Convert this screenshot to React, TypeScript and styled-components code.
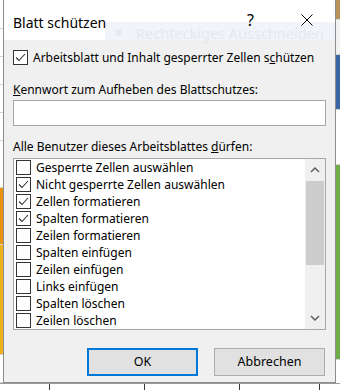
import React from 'react'
import styled, { createGlobalStyle } from 'styled-components'

const GlobalStyle = createGlobalStyle`
  html, body {
    margin: 0;
    padding: 0;
    background: #ffffff;
  }
  body {
    font-family: "Noto Sans", "Open Sans", sans-serif;
    font-size: 12px;
    line-height: 16px;
    color: #000;
  }
`

const Screen = styled.div`
  width: 340px;
  height: 390px;
  display: grid;
  grid-template-columns: 3px 333px 4px;
  grid-template-rows: 383px 7px;
  overflow: hidden;
`

const SideStrip = styled.div`
  display: flex;
  flex-direction: column;
  background: #ffffff;
`

const Band = styled.div<{ $h: number; $c: string }>`
  height: ${(p) => p.$h}px;
  flex: none;
  background: ${(p) => p.$c};
  border-bottom: 1px solid #d4d4d4;
  box-sizing: border-box;
`

const BottomStrip = styled.div`
  grid-column: 1 / 4;
  display: grid;
  grid-template-columns: 50px 95px 95px 80px 1fr;
  background: #ffffff;
  border-top: 1px solid #9a9a9a;
`

const Cell = styled.div`
  border-right: 1px solid #3a3a3a;
`

const Dialog = styled.div`
  position: relative;
  display: flex;
  flex-direction: column;
  background: #f0f0f0;
  border: 1px solid #8c8c8c;
  border-top: none;
  box-sizing: border-box;
`

const TitleBar = styled.div`
  position: relative;
  height: 40px;
  flex: none;
  background: #ffffff;
  display: flex;
  align-items: flex-start;
  padding: 12px 0 0 9px;
  box-sizing: border-box;
`

const Ghost = styled.div`
  position: absolute;
  left: 101px;
  right: 0;
  top: 22px;
  height: 18px;
  background: #f1f4f8;
  display: flex;
  align-items: flex-end;
  gap: 14px;
  padding-left: 10px;
  color: #e4e9ee;
  font-size: 14.5px;
  line-height: 14px;
`

const GhostDot = styled.span`
  width: 7px;
  height: 7px;
  margin-bottom: 4px;
  border-radius: 50%;
  background: #e6ebf0;
`

const Title = styled.div`
  position: relative;
  font-size: 14px;
  line-height: 18px;
  margin-top: 2px;
`

const TitleButtons = styled.div`
  position: relative;
  margin-left: auto;
  display: flex;
  align-items: center;
  gap: 47px;
  padding: 2px 22px 0 0;
`

const Help = styled.span`
  font-size: 16px;
  line-height: 12px;
`

const Body = styled.div`
  display: flex;
  flex-direction: column;
  padding: 10px 9px 0 9px;
`

const CheckRow = styled.label<{ $h?: number }>`
  display: flex;
  align-items: center;
  gap: 5px;
  height: ${(p) => p.$h ?? 17}px;
  white-space: nowrap;
`

const Box = styled.span`
  width: 15px;
  height: 15px;
  flex: none;
  box-sizing: border-box;
  border: 1px solid #333333;
  background: #ffffff;
  display: flex;
  align-items: center;
  justify-content: center;
`

const Label = styled.div<{ $top: number }>`
  margin-top: ${(p) => p.$top}px;
  white-space: nowrap;
`

const Input = styled.div`
  margin-top: 2px;
  height: 26px;
  box-sizing: border-box;
  background: #ffffff;
  border: 1px solid #a6a6a6;
`

const ListBox = styled.div`
  margin-top: 3px;
  height: 172px;
  box-sizing: border-box;
  border: 1px solid #a6a6a6;
  background: #ffffff;
  display: flex;
`

const Items = styled.div`
  flex: 1;
  display: flex;
  flex-direction: column;
  padding-left: 2px;
`

const ScrollBar = styled.div`
  width: 20px;
  flex: none;
  background: #f0f0f0;
  display: flex;
  flex-direction: column;
`

const Arrow = styled.div`
  height: 22px;
  display: flex;
  align-items: center;
  justify-content: center;
`

const Thumb = styled.div`
  height: 84px;
  margin: 0 1px;
  background: #cdcdcd;
`

const Track = styled.div`
  flex: 1;
`

const Buttons = styled.div`
  display: flex;
  justify-content: flex-end;
  gap: 16px;
  margin-top: 18px;
  padding-right: 1px;
`

const Button = styled.div<{ $default?: boolean }>`
  width: 111px;
  height: 28px;
  box-sizing: border-box;
  background: #e1e1e1;
  border: ${(p) => (p.$default ? '2px solid #0078d7' : '1px solid #adadad')};
  display: flex;
  align-items: center;
  justify-content: center;
  font-size: 12.5px;
`

const Check = () => (
  <svg width="13" height="13" viewBox="0 0 13 13">
    <polyline points="2,6.5 5,9.5 11,3" fill="none" stroke="#333" strokeWidth="1.1" />
  </svg>
)

const Chevron = ({ up }: { up?: boolean }) => (
  <svg width="10" height="6" viewBox="0 0 10 6">
    <polyline
      points={up ? '1,5 5,1 9,5' : '1,1 5,5 9,1'}
      fill="none"
      stroke="#606060"
      strokeWidth="1.5"
    />
  </svg>
)

const permissions: [string, boolean][] = [
  ['Gesperrte Zellen auswählen', false],
  ['Nicht gesperrte Zellen auswählen', true],
  ['Zellen formatieren', true],
  ['Spalten formatieren', true],
  ['Zeilen formatieren', false],
  ['Spalten einfügen', false],
  ['Zeilen einfügen', false],
  ['Links einfügen', false],
  ['Spalten löschen', false],
  ['Zeilen löschen', false],
]

const App: React.FC = () => {
  return (
    <>
      <GlobalStyle />
      <Screen>
        <SideStrip>
          <Band $h={29} $c="#ffffff" />
          <Band $h={28} $c="#ffffff" />
          <Band $h={28} $c="#ffffff" />
          <Band $h={28} $c="#ffffff" />
          <Band $h={28} $c="#ffffff" />
          <Band $h={47} $c="#ffffff" />
          <Band $h={57} $c="#e8920f" />
          <Band $h={110} $c="#f0b21a" />
          <Band $h={28} $c="#ffffff" />
        </SideStrip>
        <Dialog>
          <TitleBar>
            <Ghost>
              <GhostDot />
              <span>Rechteckiges Ausschneiden</span>
            </Ghost>
            <Title>Blatt schützen</Title>
            <TitleButtons>
              <Help>?</Help>
              <svg width="12" height="12" viewBox="0 0 12 12">
                <path d="M0.5 0.5 L11.5 11.5 M11.5 0.5 L0.5 11.5" stroke="#000" strokeWidth="1" />
              </svg>
            </TitleButtons>
          </TitleBar>
          <Body>
            <CheckRow $h={15}>
              <Box>
                <Check />
              </Box>
              <span>
                Arbeitsblatt und Inhalt gesperrter Zellen s<u>c</u>hützen
              </span>
            </CheckRow>
            <Label $top={17}>
              <u>K</u>ennwort zum Aufheben des Blattschutzes:
            </Label>
            <Input />
            <Label $top={13}>
              Alle Benutzer dieses Arbeitsblattes <u>d</u>ürfen:
            </Label>
            <ListBox>
              <Items>
                {permissions.map(([text, checked]) => (
                  <CheckRow key={text}>
                    <Box>{checked && <Check />}</Box>
                    <span>{text}</span>
                  </CheckRow>
                ))}
              </Items>
              <ScrollBar>
                <Arrow>
                  <Chevron up />
                </Arrow>
                <Thumb />
                <Track />
                <Arrow>
                  <Chevron />
                </Arrow>
              </ScrollBar>
            </ListBox>
            <Buttons>
              <Button $default>OK</Button>
              <Button>Abbrechen</Button>
            </Buttons>
          </Body>
        </Dialog>
        <SideStrip>
          <Band $h={20} $c="#b8945a" />
          <Band $h={35} $c="#f2f2f2" />
          <Band $h={55} $c="#3a66a8" />
          <Band $h={55} $c="#ffffff" />
          <Band $h={195} $c="#70ad47" />
          <Band $h={30} $c="#ffffff" />
        </SideStrip>
        <BottomStrip>
          <Cell />
          <Cell />
          <Cell />
          <Cell />
          <div />
        </BottomStrip>
      </Screen>
    </>
  )
}

export default App
